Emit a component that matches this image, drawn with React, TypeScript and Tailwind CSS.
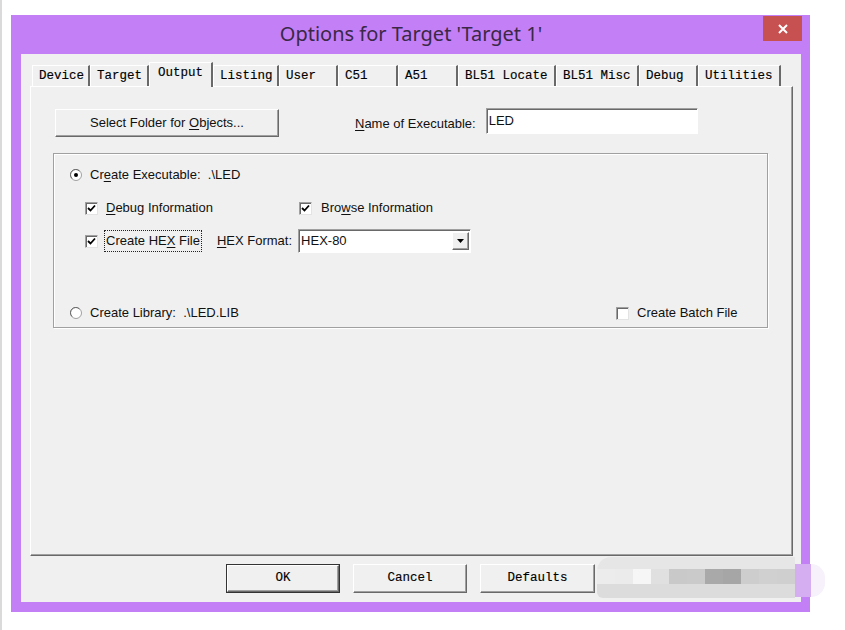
import React from "react";

const tabs = [
  { label: "Device", w: 58 },
  { label: "Target", w: 59 },
  { label: "Output", w: 64, active: true },
  { label: "Listing", w: 66 },
  { label: "User", w: 59 },
  { label: "C51", w: 60 },
  { label: "A51", w: 60 },
  { label: "BL51 Locate", w: 98 },
  { label: "BL51 Misc", w: 83 },
  { label: "Debug", w: 59 },
  { label: "Utilities", w: 83 },
];

const mono = "font-['Liberation_Mono','Courier_New',monospace]";
const sans = "font-['Liberation_Sans',Arial,sans-serif]";

function Check({ checked }: { checked?: boolean }) {
  return (
    <span className="flex h-[13px] w-[13px] shrink-0 items-center justify-center border border-t-[#a0a0a0] border-l-[#a0a0a0] border-r-[#e3e3e3] border-b-[#e3e3e3] bg-white shadow-[inset_1px_1px_0_#696969]">
      {checked && (
        <svg width="9" height="9" viewBox="0 0 9 9">
          <path d="M1 4 L3.5 6.5 L8 1.5" fill="none" stroke="#000" strokeWidth="1.8" />
        </svg>
      )}
    </span>
  );
}

function Radio({ on }: { on?: boolean }) {
  return (
    <svg width="12" height="12" viewBox="0 0 12 12" className="shrink-0">
      <circle cx="6" cy="6" r="5.5" fill="#fff" stroke="#a0a0a0" />
      <path d="M2 9.5 A5 5 0 0 1 9.5 2" fill="none" stroke="#696969" />
      {on && <circle cx="6" cy="6" r="2" fill="#000" />}
    </svg>
  );
}

function U({ children }: { children: React.ReactNode }) {
  return <span className="underline underline-offset-2">{children}</span>;
}

const raised =
  "border border-t-white border-l-white border-r-[#696969] border-b-[#696969] shadow-[inset_-1px_-1px_0_#a0a0a0] bg-[#f0f0f0]";
const sunken =
  "border border-t-[#a0a0a0] border-l-[#a0a0a0] border-r-white border-b-white shadow-[inset_1px_1px_0_#696969] bg-white";

function Blob() {
  const mid = ["#ececec", "#ebebeb", "#f6f6f6", "#e0e0e0", "#c9c9c9", "#cacaca", "#a9a9a9", "#a6a6a6", "#cdcdcd", "#d0d0d0", "#cfcfcf"];
  return (
    <div className="absolute left-[595px] top-[557px] flex h-[41px] w-[228px]">
      <div className="flex w-[198px] flex-col overflow-hidden rounded-tl-[14px] rounded-bl-[6px]">
        <div className="h-[12px] bg-[#e6e6e6]" />
        <div className="flex h-[15px]">
          {mid.map((c, i) => (
            <div key={i} className="h-full flex-1" style={{ background: c }} />
          ))}
        </div>
        <div className="flex-1 bg-[#dcdcdc]" />
      </div>
      <div className="mt-[7px] h-[33px] w-[16px] bg-[#d4aef0]" />
      <div className="mt-[7px] h-[33px] w-[14px] rounded-r-full bg-[#f6f1fa]" />
    </div>
  );
}

export default function App() {
  return (
    <div className={`relative h-[630px] w-[845px] overflow-hidden border-l-2 border-[#dadada] bg-white ${sans}`}>
      <div className="ml-[9px] mt-[15px] flex h-[597px] w-[799px] flex-col bg-[#c37ff5] pb-[10px] pl-[10px] pr-[9px]">
        {/* title bar */}
        <div className="relative flex h-[39px] shrink-0 items-center justify-center">
          <span className="pb-[1px] font-['Noto_Sans','Open_Sans',sans-serif] text-[20px] text-[#3a2846]">
            Options for Target 'Target 1'
          </span>
          <div className="absolute right-[-1px] top-[1px] flex h-[25px] w-[39px] items-center justify-center bg-[#c75050]">
            <svg width="10" height="10" viewBox="0 0 10 10">
              <path d="M1 1 L9 9 M9 1 L1 9" stroke="#fff" strokeWidth="2" />
            </svg>
          </div>
        </div>

        {/* client */}
        <div className="flex flex-1 flex-col bg-[#f0f0f0] pt-[8px]">
          <div className="ml-[11px] flex h-[24px] items-end">
            {tabs.map((t) => (
              <div
                key={t.label}
                style={{ width: t.w }}
                className={`${mono} relative flex shrink-0 items-center border-l border-t border-l-white border-t-white border-r-2 border-r-[#696969] text-[12.5px] text-black [-webkit-text-stroke:0.15px_#000] ${
                  t.active
                    ? "z-10 -mb-[1px] h-[25px] bg-[#f0f0f0] pb-[4px] pl-[8px]"
                    : "h-[21px] pl-[6px]"
                }`}
              >
                {t.label}
              </div>
            ))}
          </div>

          <div className="ml-[9px] flex h-[470px] w-[763px] flex-col border border-l-white border-t-white border-r-[#696969] border-b-[#696969] pl-[22px] pt-[22px] text-[13px] text-[#111] shadow-[inset_-1px_-1px_0_#a0a0a0]">
            <div className="ml-[2px] flex items-start">
              <div className={`${raised} flex h-[28px] w-[224px] items-center justify-center`}>
                Select Folder for&nbsp;<U>O</U>bjects...
              </div>
              <span className="ml-[76px] mt-[5px]">
                <U>N</U>ame of Executable:
              </span>
              <div className={`${sunken} ml-[10px] mt-[-1px] flex h-[26px] w-[212px] items-start px-[2px] pt-[2px]`}>LED</div>
            </div>

            <div className="mt-[16px] flex h-[175px] w-[715px] flex-col border border-[#a0a0a0] pl-[16px] pt-[12px] shadow-[inset_1px_1px_0_#fff,1px_1px_0_#fff]">
              <div className="flex h-[18px] items-center gap-[8px]">
                <Radio on />
                <span>
                  Cr<U>e</U>ate Executable:&nbsp; .\LED
                </span>
              </div>
              <div className="ml-[15px] mt-[15px] flex h-[18px] items-center">
                <Check checked />
                <span className="ml-[8px] w-[193px]">
                  <U>D</U>ebug Information
                </span>
                <Check checked />
                <span className="ml-[9px]">
                  Bro<U>w</U>se Information
                </span>
              </div>
              <div className="ml-[15px] mt-[12px] flex h-[24px] items-center">
                <Check checked />
                <span className="ml-[6px] border border-dotted border-[#222] px-[1px]">
                  Create HE<U>X</U> File
                </span>
                <span className="ml-[15px]">
                  <U>H</U>EX Format:
                </span>
                <div className={`${sunken} ml-[6px] flex h-[24px] w-[173px] items-center justify-between pl-[2px] pr-[1px]`}>
                  <span>HEX-80</span>
                  <div className={`${raised} flex h-[18px] w-[17px] items-center justify-center`}>
                    <svg width="7" height="4" viewBox="0 0 7 4">
                      <path d="M0 0 H7 L3.5 4 Z" fill="#000" />
                    </svg>
                  </div>
                </div>
              </div>
              <div className="mt-[51px] flex h-[18px] items-center">
                <Radio />
                <span className="ml-[8px] w-[526px]">Create Library:&nbsp; .\LED.LIB</span>
                <Check />
                <span className="ml-[8px]">Create Batch File</span>
              </div>
            </div>
          </div>

          <div className={`${mono} ml-[205px] mt-[8px] flex gap-[13px] text-[12.5px] text-black [-webkit-text-stroke:0.15px_#000]`}>
            <div className="border border-[#333]">
              <div className={`${raised} flex h-[27px] w-[112px] items-center justify-center`}>OK</div>
            </div>
            <div className={`${raised} flex h-[29px] w-[114px] items-center justify-center`}>Cancel</div>
            <div className={`${raised} flex h-[29px] w-[115px] items-center justify-center`}>Defaults</div>
            <div className={`${raised} flex h-[29px] w-[114px] items-center justify-center`}>Help</div>
          </div>
        </div>
      </div>
      <Blob />
    </div>
  );
}
